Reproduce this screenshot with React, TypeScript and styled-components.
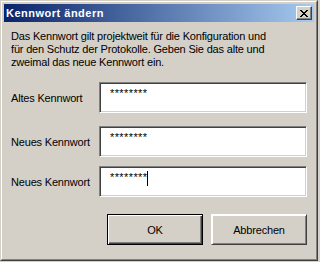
import React from "react";
import styled, { createGlobalStyle } from "styled-components";

const GlobalStyle = createGlobalStyle`
  html, body {
    margin: 0;
    padding: 0;
    background: #d4d0c8;
  }
  body {
    font-family: "Liberation Sans", Arial, sans-serif;
    font-size: 11px;
    letter-spacing: -0.18px;
    color: #000000;
  }
`;

const Window = styled.div`
  box-sizing: border-box;
  width: 318px;
  height: 261px;
  display: flex;
  flex-direction: column;
  background: #d4d0c8;
  border-top: 1px solid #d4d0c8;
  border-left: 1px solid #d4d0c8;
  border-right: 1px solid #404040;
  border-bottom: 1px solid #404040;
`;

const Frame = styled.div`
  flex: 1;
  display: flex;
  flex-direction: column;
  border-top: 1px solid #ffffff;
  border-left: 1px solid #ffffff;
  border-right: 1px solid #808080;
  border-bottom: 1px solid #808080;
  padding: 2px;
`;

const TitleBar = styled.div`
  height: 18px;
  display: flex;
  align-items: center;
  justify-content: space-between;
  padding: 0 2px 0 2px;
  background: linear-gradient(to right, #0a246a, #a6caf0);
`;

const Title = styled.span`
  color: #ffffff;
  font-weight: bold;
  font-size: 11px;
  letter-spacing: 0.5px;
`;

const CloseButton = styled.div`
  box-sizing: border-box;
  width: 16px;
  height: 14px;
  display: flex;
  align-items: center;
  justify-content: center;
  background: #d4d0c8;
  border-top: 1px solid #ffffff;
  border-left: 1px solid #ffffff;
  border-right: 1px solid #404040;
  border-bottom: 1px solid #404040;
  box-shadow: inset -1px -1px 0 #808080;
`;

const Body = styled.div`
  display: flex;
  flex-direction: column;
  padding: 8px 7px 0 7px;
`;

const Description = styled.p`
  margin: 0;
  line-height: 13px;
`;

const Row = styled.div<{ $gap: number }>`
  display: grid;
  grid-template-columns: 88px 208px;
  align-items: center;
  margin-top: ${(p) => p.$gap}px;
`;

const Label = styled.label``;

const PasswordField = styled.div`
  box-sizing: border-box;
  height: 31px;
  background: #ffffff;
  border-top: 1px solid #808080;
  border-left: 1px solid #808080;
  border-right: 1px solid #ffffff;
  border-bottom: 1px solid #ffffff;
  box-shadow: inset 1px 1px 0 #404040, inset -1px -1px 0 #d4d0c8;
  padding: 3px 0 0 10px;
  font-size: 11px;
  line-height: 15px;
  letter-spacing: 0.4px;
  display: flex;
  align-items: flex-start;
`;

const Caret = styled.span`
  display: inline-block;
  width: 1px;
  height: 15px;
  background: #000000;
  margin-top: 1px;
`;

const ButtonRow = styled.div`
  display: flex;
  justify-content: flex-end;
  gap: 8px;
  margin-top: 17px;
`;

const Button = styled.div<{ $default?: boolean }>`
  box-sizing: border-box;
  width: 96px;
  height: 31px;
  display: flex;
  align-items: center;
  justify-content: center;
  background: #d4d0c8;
  border: 1px solid ${(p) => (p.$default ? "#000000" : "transparent")};
  box-shadow: ${(p) =>
    p.$default
      ? "inset 1px 1px 0 #ffffff, inset -1px -1px 0 #404040, inset -2px -2px 0 #808080"
      : "inset 1px 1px 0 #ffffff, inset -1px -1px 0 #808080"};
  ${(p) =>
    p.$default
      ? ""
      : "border-top-color: #ffffff; border-left-color: #ffffff; border-right-color: #404040; border-bottom-color: #404040;"}
`;

const App: React.FC = () => {
  return (
    <>
      <GlobalStyle />
      <Window>
        <Frame>
          <TitleBar>
            <Title>Kennwort ändern</Title>
            <CloseButton>
              <svg width="8" height="7" viewBox="0 0 8 7" shapeRendering="crispEdges">
                <path
                  d="M0 0h2v1h-2zM6 0h2v1h-2zM1 1h2v1h-2zM5 1h2v1h-2zM2 2h4v1h-4zM3 3h2v1h-2zM2 4h4v1h-4zM1 5h2v1h-2zM5 5h2v1h-2zM0 6h2v1h-2zM6 6h2v1h-2z"
                  fill="#000000"
                />
              </svg>
            </CloseButton>
          </TitleBar>
          <Body>
            <Description>
              Das Kennwort gilt projektweit für die Konfiguration und
              <br />
              für den Schutz der Protokolle. Geben Sie das alte und
              <br />
              zweimal das neue Kennwort ein.
            </Description>
            <Row $gap={13}>
              <Label>Altes Kennwort</Label>
              <PasswordField>********</PasswordField>
            </Row>
            <Row $gap={13}>
              <Label>Neues Kennwort</Label>
              <PasswordField>********</PasswordField>
            </Row>
            <Row $gap={9}>
              <Label>Neues Kennwort</Label>
              <PasswordField>
                ********
                <Caret />
              </PasswordField>
            </Row>
            <ButtonRow>
              <Button $default>OK</Button>
              <Button>Abbrechen</Button>
            </ButtonRow>
          </Body>
        </Frame>
      </Window>
    </>
  );
};

export default App;
